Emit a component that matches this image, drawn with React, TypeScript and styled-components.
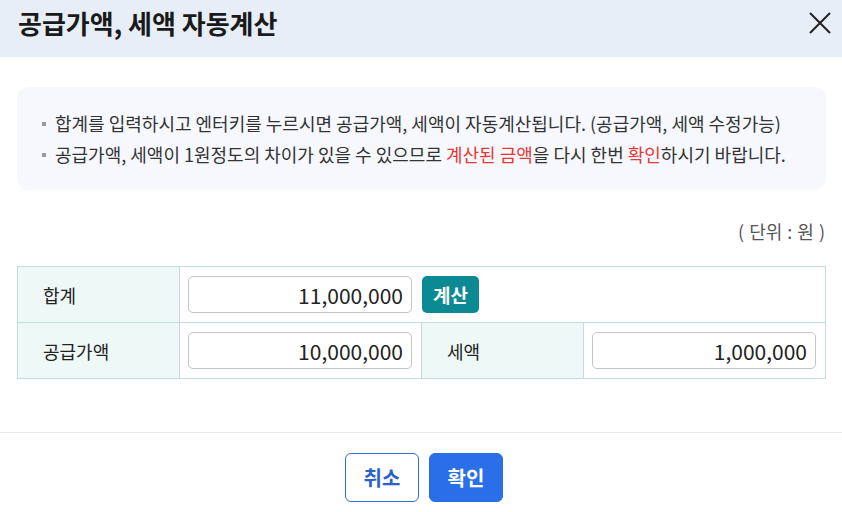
import React from "react";
import styled, { createGlobalStyle } from "styled-components";

const Global = createGlobalStyle`
  html, body { margin: 0; padding: 0; background: #fff; }
  body { font-family: "Noto Sans CJK KR", "Noto Sans", sans-serif; color: #222; }
  * { box-sizing: border-box; }
`;

const Dialog = styled.div`
  width: 842px;
  height: 512px;
  display: flex;
  flex-direction: column;
  background: #fff;
`;

const Header = styled.div`
  height: 57px;
  flex: none;
  background: #e8eef8;
  display: flex;
  align-items: center;
  justify-content: space-between;
  padding: 0 8px 11px 18px;
`;

const Title = styled.h1`
  margin: 0;
  font-size: 26px;
  line-height: 32px;
  font-weight: 700;
  color: #1a1a1a;
  letter-spacing: 0;
`;

const CloseButton = styled.button`
  width: 28px;
  height: 28px;
  border: 0;
  background: none;
  padding: 0;
  display: flex;
  align-items: center;
  justify-content: center;
  cursor: pointer;
`;

const Body = styled.div`
  flex: 1;
  padding: 30px 16px 0 17px;
  display: flex;
  flex-direction: column;
`;

const InfoBox = styled.ul`
  margin: 0;
  list-style: none;
  background: #f6f8fd;
  border-radius: 12px;
  padding: 21px 10px 20px 24px;
`;

const InfoItem = styled.li`
  position: relative;
  padding-left: 14px;
  font-size: 18px;
  line-height: 31px;
  color: #333;
  white-space: nowrap;
  &::before {
    content: "";
    position: absolute;
    left: 1px;
    top: 14px;
    width: 4px;
    height: 4px;
    background: #999;
  }
`;

const Red = styled.span`
  color: #e53935;
`;

const Unit = styled.div`
  text-align: right;
  font-size: 18px;
  color: #555;
  margin-top: 29px;
  line-height: 24px;
  padding-right: 1px;
  word-spacing: 1px;
`;

const Table = styled.div`
  margin-top: 23px;
  display: grid;
  grid-template-columns: 162px 242px 162px 1fr;
  border-top: 1px solid #c5dcdc;
  border-left: 1px solid #c5dcdc;
`;

const Label = styled.div`
  height: 56px;
  background: #eef8f7;
  border-right: 1px solid #c5dcdc;
  border-bottom: 1px solid #c5dcdc;
  display: flex;
  align-items: center;
  padding-left: 25px;
  font-size: 18px;
  color: #222;
`;

const Cell = styled.div<{ $span?: number }>`
  height: 56px;
  grid-column: span ${(p) => p.$span ?? 1};
  border-right: 1px solid #c5dcdc;
  border-bottom: 1px solid #c5dcdc;
  display: flex;
  align-items: center;
  gap: 10px;
  padding: 0 9px 0 8px;
`;

const AmountInput = styled.input`
  width: 224px;
  height: 37px;
  border: 1px solid #c4c4c4;
  border-radius: 5px;
  text-align: right;
  padding: 0 8px;
  font-family: "Noto Sans CJK KR", "Noto Sans", sans-serif;
  font-size: 21px;
  color: #222;
  background: #fff;
  outline: none;
`;

const CalcButton = styled.button`
  width: 57px;
  height: 37px;
  border: 0;
  border-radius: 5px;
  background: #0c8a94;
  color: #fff;
  font-family: "Noto Sans CJK KR", "Noto Sans", sans-serif;
  font-size: 19px;
  font-weight: 700;
  padding: 0;
`;

const Footer = styled.div`
  flex: none;
  border-top: 1px solid #e6e9ef;
  height: 80px;
  display: flex;
  justify-content: center;
  gap: 10px;
  padding: 20px 0 0 6px;
`;

const FooterButton = styled.button<{ $primary?: boolean }>`
  width: 74px;
  height: 49px;
  border-radius: 6px;
  border: 1px solid #2a6fe0;
  background: ${(p) => (p.$primary ? "#2a6fe8" : "#fff")};
  color: ${(p) => (p.$primary ? "#fff" : "#2a62c9")};
  font-family: "Noto Sans CJK KR", "Noto Sans", sans-serif;
  font-size: 20px;
  font-weight: 700;
  padding: 0;
`;

export default function App() {
  return (
    <>
      <Global />
      <Dialog>
        <Header>
          <Title>공급가액, 세액 자동계산</Title>
          <CloseButton aria-label="닫기">
            <svg width="24" height="24" viewBox="0 0 24 24">
              <path d="M2 2 L22 22 M22 2 L2 22" stroke="#222" strokeWidth="2" fill="none" />
            </svg>
          </CloseButton>
        </Header>
        <Body>
          <InfoBox>
            <InfoItem>
              합계를 입력하시고 엔터키를 누르시면 공급가액, 세액이 자동계산됩니다. (공급가액, 세액 수정가능)
            </InfoItem>
            <InfoItem>
              공급가액, 세액이 1원정도의 차이가 있을 수 있으므로 <Red>계산된 금액</Red>을 다시 한번 <Red>확인</Red>하시기 바랍니다.
            </InfoItem>
          </InfoBox>
          <Unit>( 단위 : 원 )</Unit>
          <Table>
            <Label>합계</Label>
            <Cell $span={3}>
              <AmountInput defaultValue="11,000,000" />
              <CalcButton>계산</CalcButton>
            </Cell>
            <Label>공급가액</Label>
            <Cell>
              <AmountInput defaultValue="10,000,000" />
            </Cell>
            <Label>세액</Label>
            <Cell>
              <AmountInput defaultValue="1,000,000" />
            </Cell>
          </Table>
        </Body>
        <Footer>
          <FooterButton>취소</FooterButton>
          <FooterButton $primary>확인</FooterButton>
        </Footer>
      </Dialog>
    </>
  );
}
